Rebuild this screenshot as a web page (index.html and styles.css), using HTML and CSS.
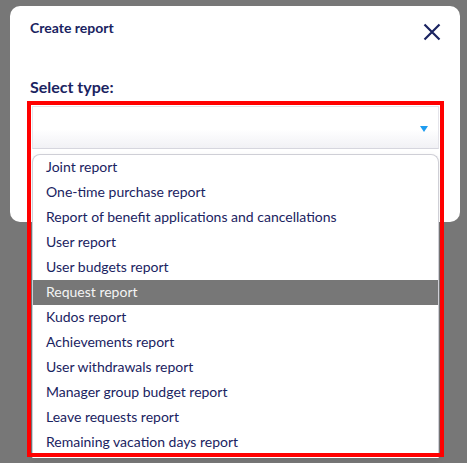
FILE: index.html
```html
<!DOCTYPE html>
<html>
<head>
<meta charset="utf-8">
<link rel="stylesheet" href="styles.css">
</head>
<body>
<div class="modal">
  <div class="modal-head">
    <h2 class="title">Create report</h2>
    <button class="close" aria-label="Close">
      <svg width="18" height="18" viewBox="0 0 18 18"><path d="M1.5 1.5 L16.5 16.5 M16.5 1.5 L1.5 16.5" stroke="#1a2361" stroke-width="2.2" fill="none"/></svg>
    </button>
  </div>
  <div class="label">Select type:</div>
  <div class="field">
    <div class="select"><span class="arrow"></span></div>
    <ul class="menu">
      <li>Joint report</li>
      <li>One-time purchase report</li>
      <li>Report of benefit applications and cancellations</li>
      <li>User report</li>
      <li>User budgets report</li>
      <li class="active">Request report</li>
      <li>Kudos report</li>
      <li>Achievements report</li>
      <li>User withdrawals report</li>
      <li>Manager group budget report</li>
      <li>Leave requests report</li>
      <li>Remaining vacation days report</li>
    </ul>
  </div>
</div>
<div class="frame"></div>
</body>
</html>
```
FILE: styles.css
```css
html, body { margin: 0; padding: 0; }
body {
  background: #777777;
  width: 467px;
  height: 463px;
  overflow: hidden;
  position: relative;
  font-family: Lato, "Noto Sans", sans-serif;
  color: #1a2361;
}
.modal {
  position: relative;
  margin: 6px 0 0 10px;
  width: 450px;
  height: 216px;
  background: #fff;
  border-radius: 10px;
  box-sizing: border-box;
  padding: 13px 20px 0 20px;
}
.modal-head {
  display: flex;
  justify-content: space-between;
  align-items: flex-start;
  height: 18px;
}
.title {
  margin: 0;
  font-size: 14px;
  font-weight: 700;
  line-height: 18px;
}
.close {
  border: 0;
  background: none;
  padding: 0;
  margin: 4px -1px 0 0;
  width: 18px;
  height: 18px;
  display: flex;
}
.label {
  margin-top: 40px;
  font-size: 16px;
  font-weight: 700;
  line-height: 20px;
}
.field {
  position: relative;
  margin: 9px 0 0 2px;
  width: 407px;
}
.select {
  height: 43px;
  box-sizing: border-box;
  border: 1px solid #e4e4ea;
  border-bottom-color: #d6d6de;
  background: linear-gradient(#ffffff 55%, #f1f1f5);
  position: relative;
}
.arrow {
  position: absolute;
  right: 10px;
  top: 19px;
  width: 0;
  height: 0;
  border-left: 4px solid transparent;
  border-right: 4px solid transparent;
  border-top: 6px solid #1e9cf0;
}
.menu {
  position: absolute;
  top: 48px;
  left: 0;
  width: 407px;
  height: 304px;
  overflow: hidden;
  margin: 0;
  padding: 0;
  list-style: none;
  background: #fff;
  border: 1px solid #cfcfd6;
  border-bottom: 0;
  border-radius: 8px 8px 0 0;
  box-sizing: border-box;
  box-shadow: 0 2px 6px rgba(0,0,0,0.08);
}
.menu li {
  height: 25px;
  line-height: 24px;
  padding-left: 13px;
  font-size: 14px;
  color: #1a2361;
  white-space: nowrap;
}
.menu li.active {
  background: #777777;
  color: #f4f4f4;
}
.frame {
  position: absolute;
  left: 27px;
  top: 101px;
  width: 417px;
  height: 356px;
  box-sizing: border-box;
  border: 4px solid #ff0000;
  pointer-events: none;
}
```
